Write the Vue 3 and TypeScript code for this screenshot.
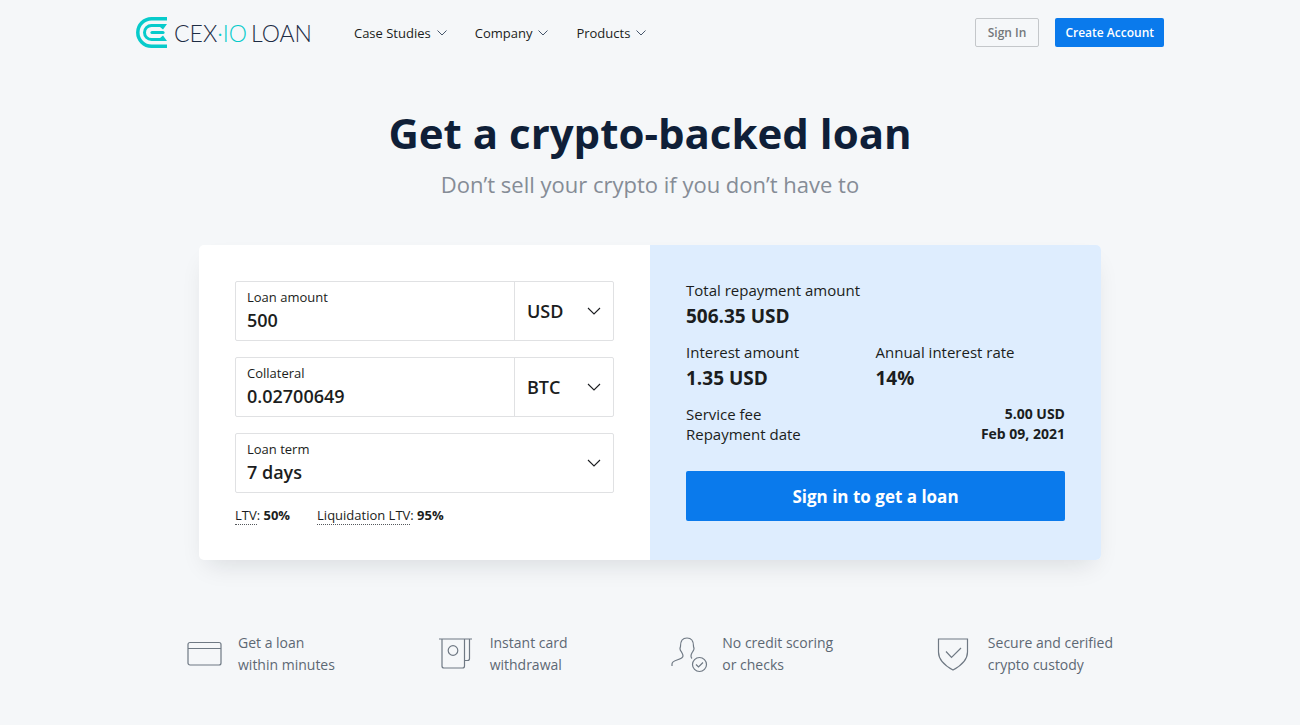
<script setup lang="ts">
import { ref } from 'vue'

const menu = ['Case Studies', 'Company', 'Products']

const amount = ref('500')
const collateral = ref('0.02700649')
const currency = ref('USD')
const coin = ref('BTC')
const term = ref('7 days')

const currencies = ['USD', 'EUR', 'GBP']
const coins = ['BTC', 'ETH']
const terms = ['7 days', '14 days', '30 days']

const features = [
  { icon: 'card', lines: ['Get a loan', 'within minutes'] },
  { icon: 'cash', lines: ['Instant card', 'withdrawal'] },
  { icon: 'person', lines: ['No credit scoring', 'or checks'] },
  { icon: 'shield', lines: ['Secure and cerified', 'crypto custody'] },
]
</script>

<template>
  <div class="page">
    <header class="header">
      <a class="logo" href="#" aria-label="CEX.IO Loan">
        <svg class="logo-mark" viewBox="0 0 31 31" width="31" height="31" fill="none" stroke="#07cbcb" aria-hidden="true">
          <path d="M31 1.8H15.500a13.700 13.700 0 0 0 0 27.400H31" stroke-width="3.500" />
          <path d="M26 8.500H15.500a7 7 0 0 0 0 14H26" stroke-width="3" />
          <path d="M16 15.500H27" stroke-width="3.200" stroke-linecap="round" />
          <path d="M25 7H31L27 12.500L24 10ZM25 24H31L27 18.500L24 21Z" fill="#07cbcb" stroke="none" />
        </svg>
        <span class="logo-text">
          <span>CEX<span class="teal">·IO</span></span>
          <span>LOAN</span>
        </span>
      </a>
      <nav class="nav">
        <button v-for="item in menu" :key="item" type="button" class="nav-item">
          {{ item }}
          <svg viewBox="0 0 10 6" width="10" height="6" fill="none" stroke="#46566b" aria-hidden="true">
            <path d="M.5.5 5 5 9.500.5" />
          </svg>
        </button>
      </nav>
      <div class="auth">
        <button type="button" class="btn btn-outline">Sign In</button>
        <button type="button" class="btn btn-primary">Create Account</button>
      </div>
    </header>

    <main>
      <h1>Get a crypto-backed loan</h1>
      <p class="subtitle">Don’t sell your crypto if you don’t have to</p>

      <section class="card">
        <form class="form" @submit.prevent>
          <div class="field">
            <div class="field-main">
              <label for="amount">Loan amount</label>
              <input id="amount" v-model="amount" type="text" />
            </div>
            <div class="field-side">
              <select v-model="currency" aria-label="Currency">
                <option v-for="c in currencies" :key="c">{{ c }}</option>
              </select>
              <svg class="chevron" viewBox="0 0 14 8" width="14" height="8" aria-hidden="true"><path d="M1 1l6 6 6-6" /></svg>
            </div>
          </div>
          <div class="field">
            <div class="field-main">
              <label for="collateral">Collateral</label>
              <input id="collateral" v-model="collateral" type="text" />
            </div>
            <div class="field-side">
              <select v-model="coin" aria-label="Collateral coin">
                <option v-for="c in coins" :key="c">{{ c }}</option>
              </select>
              <svg class="chevron" viewBox="0 0 14 8" width="14" height="8" aria-hidden="true"><path d="M1 1l6 6 6-6" /></svg>
            </div>
          </div>
          <div class="field">
            <div class="field-main">
              <label for="term">Loan term</label>
              <select id="term" v-model="term">
                <option v-for="t in terms" :key="t">{{ t }}</option>
              </select>
              <svg class="chevron" viewBox="0 0 14 8" width="14" height="8" aria-hidden="true"><path d="M1 1l6 6 6-6" /></svg>
            </div>
          </div>
          <div class="ltv">
            <span><span class="hint">LTV</span>: <b>50%</b></span>
            <span><span class="hint">Liquidation LTV</span>: <b>95%</b></span>
          </div>
        </form>

        <div class="summary">
          <dl class="totals">
            <div class="wide">
              <dt>Total repayment amount</dt>
              <dd>506.35 USD</dd>
            </div>
            <div>
              <dt>Interest amount</dt>
              <dd>1.35 USD</dd>
            </div>
            <div>
              <dt>Annual interest rate</dt>
              <dd>14%</dd>
            </div>
          </dl>
          <dl class="details">
            <div>
              <dt>Service fee</dt>
              <dd>5.00 USD</dd>
            </div>
            <div>
              <dt>Repayment date</dt>
              <dd>Feb 09, 2021</dd>
            </div>
          </dl>
          <button type="button" class="cta">Sign in to get a loan</button>
        </div>
      </section>

      <ul class="features">
        <li v-for="f in features" :key="f.icon">
          <svg class="icon" viewBox="0 0 36 36" width="36" height="36" aria-hidden="true">
            <g v-if="f.icon === 'card'">
              <rect x="1" y="6.500" width="33" height="22.500" rx="2" />
              <path d="M1 12.500h33" />
            </g>
            <g v-else-if="f.icon === 'cash'">
              <path d="M0 3h33M3 3v27a2 2 0 0 0 2 2h18.500a2 2 0 0 0 2-2V3M30.500 3v19.500a2 2 0 0 1-2 2h-3" />
              <circle cx="14" cy="14.500" r="4.800" />
            </g>
            <g v-else-if="f.icon === 'person'">
              <path d="M1 30v-2c0-2 2-3 5-4 4-1.300 6-2 6-4 0-2-.7-2.500-1.500-4-.7-1-1.500-1.500-1.500-3.500 0-1 .5-1 .5-2.500C9.500 5 11.500 2 16 2s6.500 3 6.500 8c0 1.500.5 1.500.5 2.500 0 2-1 2.500-1.500 3.500-.9 1.500-1.500 2-1.500 4 0 1 .3 1.800 1 2.500" />
              <circle cx="28.500" cy="28.500" r="7" />
              <path d="M25 28.500l2.500 2.500 4.500-4.500" />
            </g>
            <g v-else>
              <path d="M1.500 3h29v13c0 8.500-7 14-14.500 18C8.500 30 1.500 24.500 1.500 16z" />
              <path d="M9 15.500l5.500 6L24 12" />
            </g>
          </svg>
          <p><span v-for="line in f.lines" :key="line">{{ line }}</span></p>
        </li>
      </ul>
    </main>
  </div>
</template>

<style>
body {
  margin: 0;
  background: #f5f7f9;
}
</style>

<style scoped>
.page {
  box-sizing: border-box;
  min-height: 100vh;
  padding: 0 24px;
  font-family: 'Open Sans', 'Noto Sans', sans-serif;
  color: #1b1d20;
}

.page *,
.page *::before {
  box-sizing: border-box;
}

button,
input,
select {
  margin: 0;
  padding: 0;
  border: 0;
  background: none;
  font: inherit;
  color: inherit;
}

button {
  cursor: pointer;
}

.header {
  display: flex;
  align-items: center;
  max-width: 1028px;
  height: 65px;
  margin: 0 auto;
}

.logo {
  display: flex;
  align-items: center;
  gap: 7px;
  color: #1d2c44;
  text-decoration: none;
}

.logo-text {
  display: flex;
  gap: 4px;
  font: 300 23px/30px Lato, sans-serif;
  white-space: nowrap;
}

.teal {
  color: #07cbcb;
}

.nav {
  display: flex;
  gap: 28px;
  margin-left: 42px;
}

.nav-item {
  display: flex;
  align-items: center;
  gap: 6px;
  font-size: 13px;
  line-height: 20px;
}

.auth {
  display: flex;
  gap: 16px;
  margin-left: auto;
}

.btn {
  height: 29px;
  border-radius: 2px;
  font-size: 12px;
  font-weight: 600;
  white-space: nowrap;
}

.btn-outline {
  padding: 0 12px;
  border: 1px solid #c4c7ca;
  color: #74777b;
}

.btn-primary {
  padding: 0 10px;
  background: #0a7aec;
  color: #fff;
}

h1 {
  margin: 36px 0 0;
  font-size: 42px;
  line-height: 64px;
  font-weight: 700;
  text-align: center;
  color: #0f1f38;
}

.subtitle {
  margin: 3px 0 0;
  font-size: 22px;
  line-height: 32px;
  text-align: center;
  color: #858c96;
}

.card {
  display: grid;
  grid-template-columns: 1fr 1fr;
  max-width: 902px;
  margin: 45px auto 0;
  border-radius: 5px;
  overflow: hidden;
  background: #fff;
  box-shadow: 0 12px 24px -8px rgba(20, 25, 35, 0.12);
}

.form,
.summary {
  padding: 36px;
}

.summary {
  padding-top: 35px;
}

.form {
  display: flex;
  flex-direction: column;
  gap: 16px;
}

.field {
  display: flex;
  height: 60px;
  border: 1px solid #e0e1e3;
  border-radius: 2px;
}

.field-main {
  position: relative;
  display: flex;
  flex: 1;
  flex-direction: column;
  min-width: 0;
  padding: 5px 12px 0 11px;
}

.field-side {
  position: relative;
  width: 99px;
  border-left: 1px solid #e0e1e3;
}

label {
  font-size: 13px;
  line-height: 20px;
}

input,
select {
  width: 100%;
  height: 26px;
  font-size: 18px;
  font-weight: 600;
  line-height: 26px;
  outline: none;
  appearance: none;
}

.field-side select {
  height: 100%;
  padding-left: 12px;
}

.chevron {
  position: absolute;
  right: 12px;
  top: 25px;
  fill: none;
  stroke: #1b1d20;
  stroke-width: 1.1;
  pointer-events: none;
}

.ltv {
  display: flex;
  gap: 27px;
  margin-top: -3px;
  font-size: 13px;
  line-height: 18px;
}

.hint {
  border-bottom: 1px dotted #55585c;
}

.summary {
  background: #deedfe;
}

dl,
dd {
  margin: 0;
}

.totals {
  display: grid;
  grid-template-columns: 1fr 1fr;
  row-gap: 10px;
  font-size: 15px;
  line-height: 20px;
}

.totals dd {
  font-size: 19px;
  line-height: 32px;
  font-weight: 700;
}

.wide {
  grid-column: 1 / -1;
}

.details {
  margin-top: 10px;
  font-size: 15px;
  line-height: 20px;
}

.details div {
  display: flex;
  justify-content: space-between;
}

.details dd {
  font-size: 14px;
  font-weight: 700;
}

.cta {
  width: 100%;
  height: 50px;
  margin-top: 27px;
  border-radius: 2px;
  background: #0a7aec;
  color: #fff;
  font-size: 17px;
  font-weight: 700;
}

.features {
  display: flex;
  justify-content: space-between;
  max-width: 926px;
  margin: 72px auto 0;
  padding: 0;
  list-style: none;
}

.features li {
  display: flex;
  align-items: center;
  gap: 15px;
}

.features p {
  margin: 0;
  font-size: 14px;
  line-height: 22px;
  color: #5d6874;
}

.features span {
  display: block;
  white-space: nowrap;
}

.icon {
  flex: none;
  overflow: visible;
  fill: none;
  stroke: #6f7984;
  stroke-width: 1.2;
}
</style>
